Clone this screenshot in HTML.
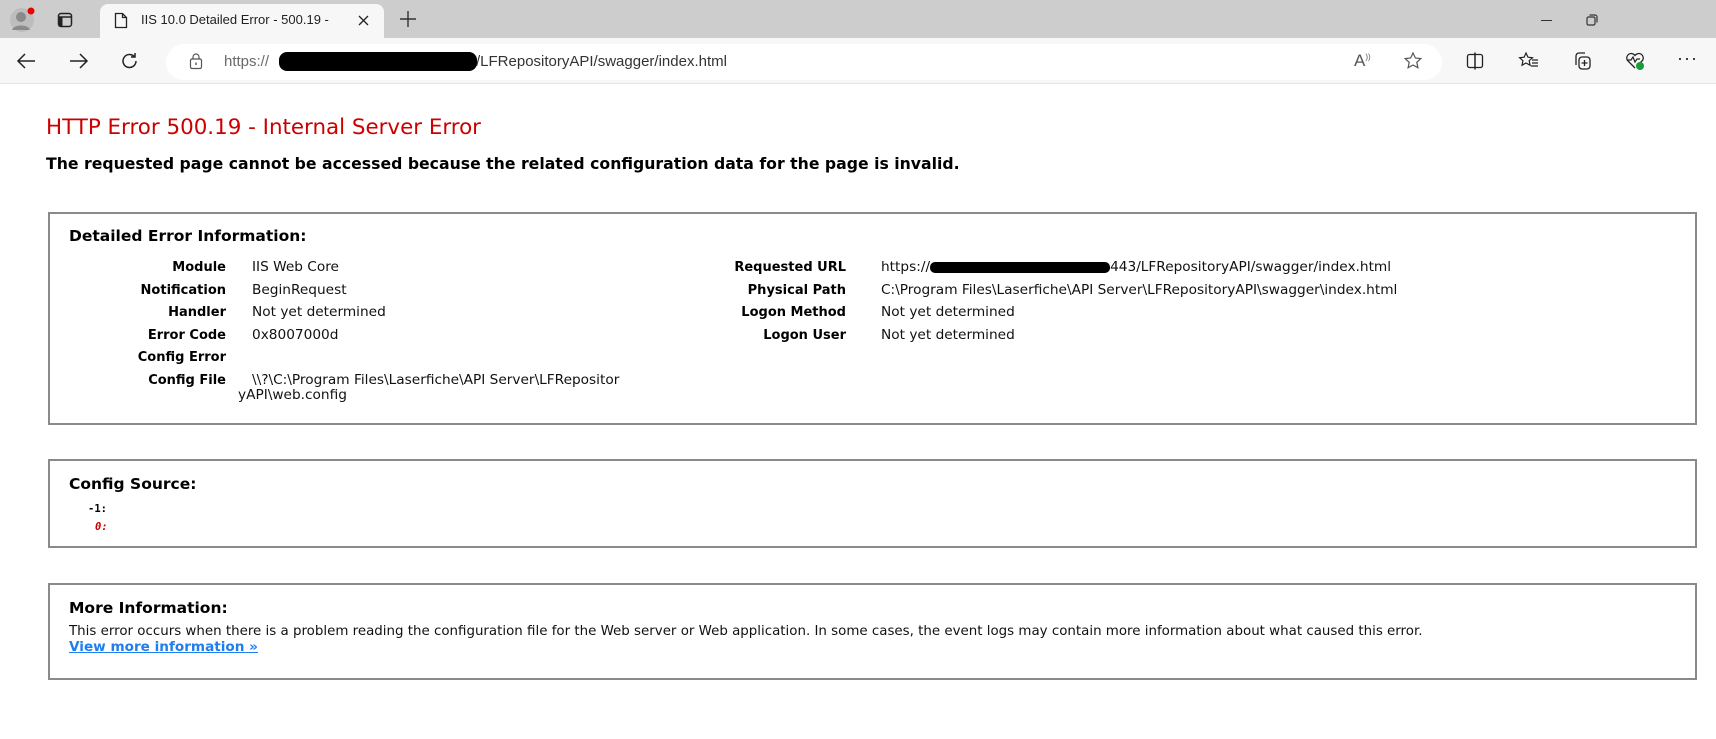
<!DOCTYPE html>
<html><head><meta charset="utf-8">
<style>
*{margin:0;padding:0;box-sizing:border-box}
body{width:1716px;height:739px;overflow:hidden;background:#fff;font-family:"DejaVu Sans","Liberation Sans",sans-serif;color:#000;position:relative}
.abs{position:absolute}
.tabbar{left:0;top:0;width:1716px;height:38px;background:#cdcdcd}
.tab{left:100px;top:4px;width:284px;height:34px;background:#f7f7f7;border-radius:8px 8px 0 0}
.addr{left:0;top:38px;width:1716px;height:46px;background:#f7f7f7;border-bottom:1px solid #e4e4e4}
.pill{left:166px;top:44px;width:1276px;height:36px;background:#fff;border-radius:18px}
.t{font-family:"Liberation Sans",sans-serif;font-size:13px;color:#222;white-space:nowrap}
.box{position:absolute;left:48px;width:1649px;border:2px solid #8a8a8a;background:#fff}
.lab{position:absolute;font-weight:bold;font-size:13px;text-align:right;white-space:nowrap}
.val{position:absolute;font-size:13.7px;white-space:nowrap;color:#111}
h2{position:absolute;font-size:15.5px;font-weight:bold;white-space:nowrap}
</style></head><body>
<div class="abs tabbar"></div>
<svg class="abs" style="left:8px;top:6px" width="28" height="28" viewBox="0 0 28 28"><circle cx="14" cy="14" r="12" fill="#bdbdbd"/><circle cx="13" cy="11" r="5" fill="#8a8a8a"/><path d="M4 24c2-6 16-6 18 0" fill="#8a8a8a"/><circle cx="23" cy="5" r="3.5" fill="#e00"/></svg>
<svg class="abs" style="left:57px;top:12px" width="16" height="16" viewBox="0 0 16 16"><rect x="1.5" y="1.5" width="13" height="13" rx="2.5" fill="none" stroke="#222" stroke-width="1.5"/><line x1="1.5" y1="5" x2="14.5" y2="5" stroke="#222" stroke-width="1.5"/><rect x="1.5" y="5" width="4" height="9.5" fill="#222"/></svg>
<div class="abs tab"></div>
<svg class="abs" style="left:114px;top:12px" width="14" height="17" viewBox="0 0 14 17"><path d="M1.5 1.5h7l4 4v10h-11z M8.5 1.5v4h4" fill="none" stroke="#222" stroke-width="1.3"/></svg>
<div class="abs t" style="left:141px;top:12px;font-size:13px">IIS 10.0 Detailed Error - 500.19 - </div>
<svg class="abs" style="left:358px;top:15px" width="11" height="11" viewBox="0 0 11 11"><path d="M1 1l9 9M10 1l-9 9" stroke="#222" stroke-width="1.3"/></svg>
<svg class="abs" style="left:400px;top:11px" width="16" height="16" viewBox="0 0 16 16"><path d="M8 0v16M0 8h16" stroke="#333" stroke-width="1.4"/></svg>
<div class="abs" style="left:1541px;top:20px;width:11px;height:1.3px;background:#333"></div>
<svg class="abs" style="left:1586px;top:14px" width="12" height="12" viewBox="0 0 12 12"><rect x="1" y="3" width="8" height="8" rx="1.5" fill="none" stroke="#333" stroke-width="1.2"/><path d="M3.5 1h5.5a2 2 0 0 1 2 2v5.5" fill="none" stroke="#333" stroke-width="1.2"/></svg>

<div class="abs addr"></div>
<svg class="abs" style="left:16px;top:52px" width="20" height="18" viewBox="0 0 20 18"><path d="M19 9H2M9 2L2 9l7 7" fill="none" stroke="#222" stroke-width="1.5"/></svg>
<svg class="abs" style="left:69px;top:52px" width="20" height="18" viewBox="0 0 20 18"><path d="M1 9h17M11 2l7 7-7 7" fill="none" stroke="#222" stroke-width="1.5"/></svg>
<svg class="abs" style="left:120px;top:51px" width="20" height="20" viewBox="0 0 20 20"><path d="M16 10a6.5 6.5 0 1 1-2-4.7M15 2v4h-4" fill="none" stroke="#222" stroke-width="1.5"/></svg>
<div class="abs pill"></div>
<svg class="abs" style="left:189px;top:52px" width="14" height="18" viewBox="0 0 14 18"><rect x="1.5" y="7" width="11" height="9.5" rx="1.5" fill="none" stroke="#555" stroke-width="1.2"/><path d="M4 7V5a3 3 0 0 1 6 0v2" fill="none" stroke="#555" stroke-width="1.2"/><rect x="6.3" y="10.5" width="1.4" height="2.5" fill="#555"/></svg>
<div class="abs t" style="left:224px;top:53px;font-size:15px;color:#6a6a6a">https://</div>
<div class="abs" style="left:279px;top:52px;width:198px;height:19px;background:#000;border-radius:8px"></div>
<div class="abs t" style="left:476px;top:53px;font-size:15px;color:#333">/LFRepositoryAPI/swagger/index.html</div>
<div class="abs t" style="left:1354px;top:51px;font-size:17px;color:#555">A<sup style="font-size:8px">))</sup></div>
<svg class="abs" style="left:1403px;top:51px" width="20" height="20" viewBox="0 0 20 20"><path d="M10 2l2.4 5 5.4.6-4 3.7 1.1 5.4L10 14l-4.9 2.7 1.1-5.4-4-3.7 5.4-.6z" fill="none" stroke="#555" stroke-width="1.2"/></svg>
<svg class="abs" style="left:1466px;top:52px" width="18" height="18" viewBox="0 0 18 18"><rect x="1.5" y="2.5" width="15" height="13" rx="2" fill="none" stroke="#222" stroke-width="1.3"/><path d="M9 0.5v17" stroke="#222" stroke-width="1.5"/></svg>
<svg class="abs" style="left:1518px;top:51px" width="22" height="20" viewBox="0 0 22 20"><path d="M8 2l2 4.2 4.5.5-3.3 3 .9 4.5L8 12l-4 2.2.9-4.5-3.3-3 4.5-.5z" fill="none" stroke="#222" stroke-width="1.2"/><path d="M14 9h6M14 12h6M13 15h7" stroke="#222" stroke-width="1.2"/></svg>
<svg class="abs" style="left:1572px;top:51px" width="20" height="20" viewBox="0 0 20 20"><path d="M4 14V5a3 3 0 0 1 3-3h6" fill="none" stroke="#222" stroke-width="1.3"/><rect x="7" y="6" width="11" height="12" rx="3" fill="none" stroke="#222" stroke-width="1.3"/><path d="M12.5 9v6M9.5 12h6" stroke="#222" stroke-width="1.3"/></svg>
<svg class="abs" style="left:1624px;top:50px" width="22" height="22" viewBox="0 0 22 22"><path d="M11 18L3.5 10.5a4.3 4.3 0 0 1 7.5-5 4.3 4.3 0 0 1 7.5 5L16 13" fill="none" stroke="#222" stroke-width="1.3"/><path d="M3 10h4l2-3 2 5 2-3h3" fill="none" stroke="#222" stroke-width="1.2"/><circle cx="16" cy="16" r="4" fill="#1a9b3a"/></svg>
<div class="abs t" style="left:1677px;top:48px;font-size:18px;color:#222;letter-spacing:1px">···</div>

<div class="abs" style="left:46px;top:115px;font-size:21.4px;color:#cc0000;white-space:nowrap">HTTP Error 500.19 - Internal Server Error</div>
<div class="abs" style="left:46px;top:154px;font-size:15.7px;font-weight:bold;white-space:nowrap">The requested page cannot be accessed because the related configuration data for the page is invalid.</div>

<div class="box" style="top:212px;height:213px"></div>
<h2 style="left:69px;top:227px">Detailed Error Information:</h2>
<div class="lab" style="right:1490px;top:260px">Module</div><div class="val" style="left:252px;top:259px">IIS Web Core</div>
<div class="lab" style="right:1490px;top:283px">Notification</div><div class="val" style="left:252px;top:282px">BeginRequest</div>
<div class="lab" style="right:1490px;top:305px">Handler</div><div class="val" style="left:252px;top:304px">Not yet determined</div>
<div class="lab" style="right:1490px;top:328px">Error Code</div><div class="val" style="left:252px;top:327px">0x8007000d</div>
<div class="lab" style="right:1490px;top:350px">Config Error</div>
<div class="lab" style="right:1490px;top:373px">Config File</div><div class="val" style="left:252px;top:372px">\\?\C:\Program Files\Laserfiche\API Server\LFRepositor</div>
<div class="val" style="left:238px;top:387px">yAPI\web.config</div>

<div class="lab" style="right:870px;top:260px">Requested URL</div><div class="val" style="left:881px;top:259px">https://<span style="display:inline-block;width:180px;height:11px;background:#000;border-radius:5px;vertical-align:middle"></span>443/LFRepositoryAPI/swagger/index.html</div>
<div class="lab" style="right:870px;top:283px">Physical Path</div><div class="val" style="left:881px;top:282px">C:\Program Files\Laserfiche\API Server\LFRepositoryAPI\swagger\index.html</div>
<div class="lab" style="right:870px;top:305px">Logon Method</div><div class="val" style="left:881px;top:304px">Not yet determined</div>
<div class="lab" style="right:870px;top:328px">Logon User</div><div class="val" style="left:881px;top:327px">Not yet determined</div>

<div class="box" style="top:459px;height:89px"></div>
<h2 style="left:69px;top:475px">Config Source:</h2>
<div class="abs" style="left:88px;top:503px;font-family:'DejaVu Sans Mono',monospace;font-size:10.5px;font-weight:bold">-1:</div>
<div class="abs" style="left:95px;top:521px;font-family:'DejaVu Sans Mono',monospace;font-size:10.5px;font-weight:bold;font-style:italic;color:#cc0000">0:</div>

<div class="box" style="top:583px;height:97px"></div>
<h2 style="left:69px;top:599px">More Information:</h2>
<div class="val" style="left:69px;top:624px;font-size:13.4px">This error occurs when there is a problem reading the configuration file for the Web server or Web application. In some cases, the event logs may contain more information about what caused this error.</div>
<div class="abs" style="left:69px;top:639px;font-size:13.6px;font-weight:bold;color:#1e7ef0;text-decoration:underline;white-space:nowrap">View more information »</div>
</body></html>
